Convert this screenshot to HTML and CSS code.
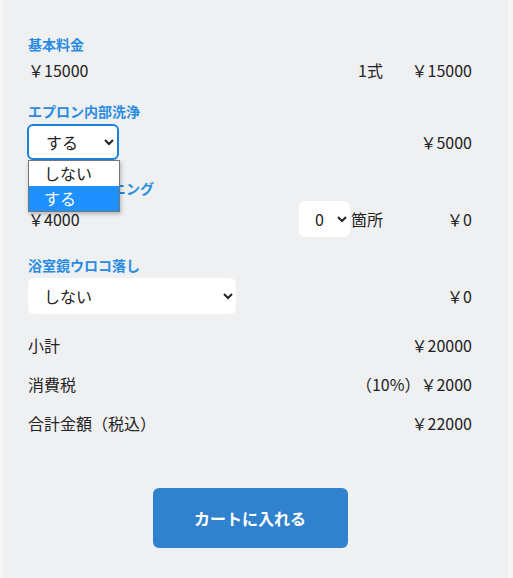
FILE: index.html
```html
<!DOCTYPE html>
<html lang="ja">
  <head>
    <meta charset="UTF-8" />
    <meta name="viewport" content="width=device-width, initial-scale=1.0" />
    <title>お見積り</title>
    <link rel="stylesheet" href="styles.css">
  </head>
  <body>
    <div class="panel">
      <div class="item">
        <div class="label">基本料金</div>
        <div class="row">
          <span class="unit">￥15000</span>
          <span class="qty">1式</span>
          <span class="price">￥15000</span>
        </div>
      </div>

      <div class="item">
        <div class="label">エプロン内部洗浄</div>
        <div class="row">
          <div class="select-wrap">
            <select class="select select-small focused">
              <option>しない</option>
              <option selected>する</option>
            </select>
            <!-- opened list of the select above -->
            <ul class="dropdown">
              <li>しない</li>
              <li class="active">する</li>
            </ul>
          </div>
          <span class="spacer"></span>
          <span class="price">￥5000</span>
        </div>
      </div>

      <div class="item">
        <div class="label">換気扇クリーニング</div>
        <div class="row">
          <span class="unit">￥4000</span>
          <span class="qty">
            <select class="select select-num">
              <option selected>0</option>
              <option>1</option>
              <option>2</option>
              <option>3</option>
            </select>箇所
          </span>
          <span class="price">￥0</span>
        </div>
      </div>

      <div class="item">
        <div class="label">浴室鏡ウロコ落し</div>
        <div class="row">
          <select class="select select-wide">
            <option selected>しない</option>
            <option>する</option>
          </select>
          <span class="spacer"></span>
          <span class="price">￥0</span>
        </div>
      </div>

      <div class="summary">
        <div class="sum-row">
          <span>小計</span>
          <span>￥20000</span>
        </div>
        <div class="sum-row">
          <span>消費税</span>
          <span>（10%）￥2000</span>
        </div>
        <div class="sum-row">
          <span>合計金額（税込）</span>
          <span>￥22000</span>
        </div>
      </div>

      <div class="actions">
        <button class="cart-btn">カートに入れる</button>
      </div>
    </div>
  </body>
</html>
```

FILE: styles.css
```css
body {
  margin: 0;
  background-color: #f6f6f7;
  font-family: "Noto Sans CJK JP", "Noto Sans", sans-serif;
  font-size: 16px;
  color: #222;
}
.panel {
  margin-left: 3px;
  width: 505px;
  min-height: 578px;
  box-sizing: border-box;
  padding: 34px 36px 0 25px;
  background-color: #eff0f2;
}
.item {
  margin-bottom: 18px;
}
.label {
  font-size: 14px;
  font-weight: bold;
  line-height: 20px;
  color: #2a8ce0;
  margin-bottom: 3px;
}
.row {
  display: flex;
  align-items: center;
  min-height: 26px;
  line-height: 26px;
}
.unit,
.spacer {
  flex: 1;
}
.qty {
  display: flex;
  align-items: center;
}
.price {
  width: 89px;
  text-align: right;
}
.select-wrap {
  position: relative;
}
.select {
  height: 36px;
  font-family: inherit;
  font-size: 16px;
  color: #222;
  background-color: #fff;
  border: none;
  border-radius: 6px;
  padding: 0 6px 0 12px;
  outline: none;
}
.select-small {
  width: 92px;
  margin-left: -1px;
}
.select.focused {
  border: 2px solid #1a82dc;
  padding-left: 13px;
}
.select-num {
  width: 51px;
  margin-right: 1px;
}
.select-wide {
  width: 208px;
}
.dropdown {
  position: absolute;
  left: 0;
  top: 36px;
  width: 90px;
  margin: 0;
  padding: 0;
  list-style: none;
  background-color: #fff;
  border: 1px solid #767676;
  box-shadow: 1px 2px 4px rgba(0, 0, 0, 0.25);
  z-index: 10;
}
.dropdown li {
  height: 25px;
  line-height: 25px;
  padding-left: 15px;
}
.dropdown li.active {
  background-color: #1e90ff;
  color: #fff;
}
.summary {
  display: flex;
  flex-direction: column;
  gap: 13px;
}
.sum-row {
  display: flex;
  justify-content: space-between;
  line-height: 26px;
}
.actions {
  display: flex;
  justify-content: center;
  margin-top: 52px;
}
.cart-btn {
  width: 195px;
  height: 60px;
  border: none;
  border-radius: 6px;
  background-color: #3182ce;
  color: #fff;
  font-family: inherit;
  font-size: 16px;
  font-weight: bold;
  cursor: pointer;
}
```
